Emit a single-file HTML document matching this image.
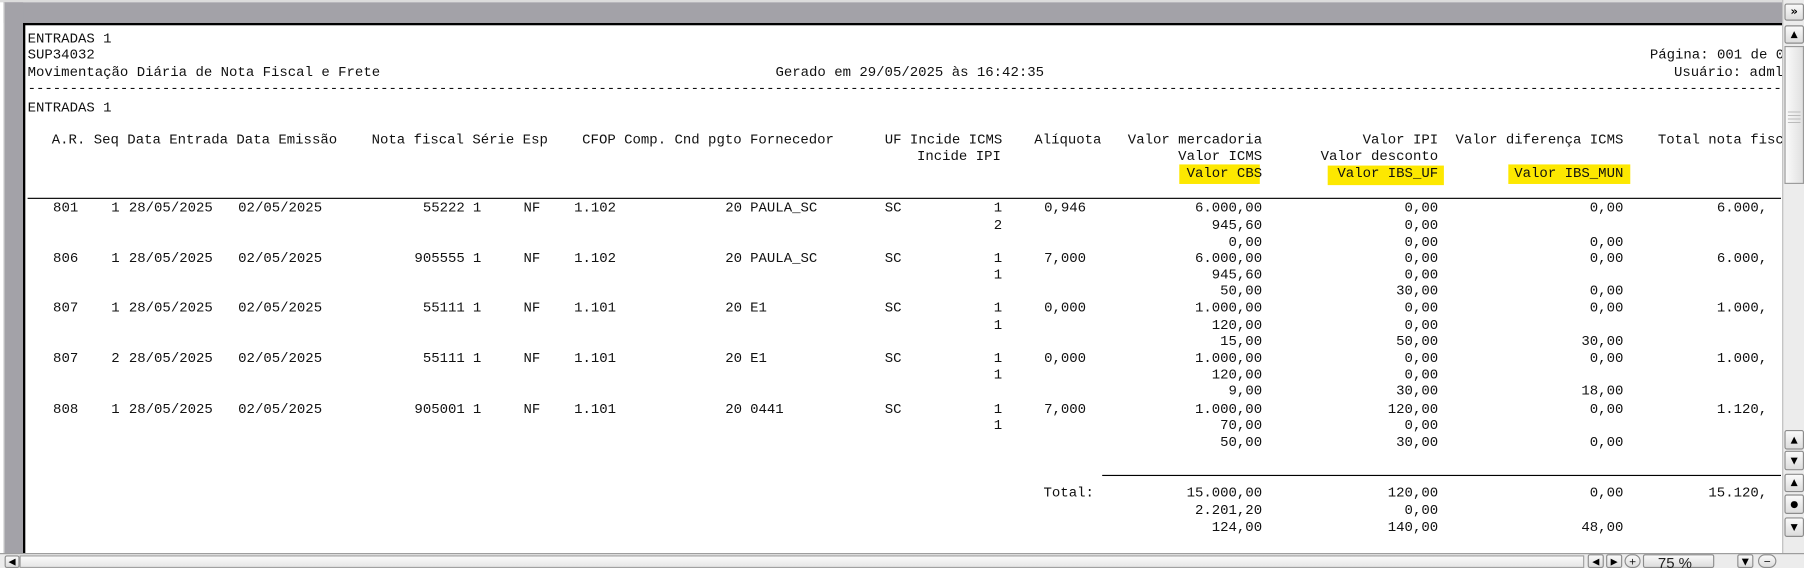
<!DOCTYPE html>
<html><head><meta charset="utf-8">
<style>
html,body{margin:0;padding:0;background:#fff;overflow:hidden;width:1804px;height:568px}
#w{position:absolute;left:0;top:0;width:1568px;height:494px;transform:scale(1.15051,1.1498);transform-origin:0 0;background:#fff;overflow:hidden}
.t{position:absolute;font-family:"Liberation Mono",monospace;font-size:12.17px;line-height:14px;color:#111;white-space:pre}
.r{position:absolute;left:0;top:0;text-align:right;font-family:"Liberation Mono",monospace;font-size:12.17px;line-height:14px;color:#111;white-space:pre}
.row{position:absolute;left:0;width:1548px;height:14px}
.row span{position:absolute;top:0;font-family:"Liberation Mono",monospace;font-size:12.17px;line-height:14px;color:#111;white-space:pre}
.e6{width:68px}.e11{width:104px}.e52{width:404px}.e85{width:645px}.e116{width:871px}.e126{width:944px}.e147{width:1097px}.e168{width:1250px}.e190{width:1411px}.e207{width:1536px}
.hl{position:absolute;background:#fde800}
.btn{position:absolute;background:linear-gradient(#fafafa,#dcdcdc);border:1px solid #8c8c8c;border-radius:2px;box-sizing:border-box;font-family:"DejaVu Sans",sans-serif;font-size:8px;text-align:center;color:#000}
</style></head><body>
<div id="w">
<div style="position:absolute;left:0;top:0;width:1568px;height:2px;background:#dcdcdc"></div>
<div style="position:absolute;left:3px;top:2px;width:1547px;height:18px;background:#a3a2a8"></div>
<div style="position:absolute;left:3px;top:2px;width:17px;height:480px;background:#a3a2a8"></div>
<div style="position:absolute;left:3px;top:2px;width:1px;height:480px;background:#d0d0d0"></div>
<div style="position:absolute;left:20px;top:20px;width:1530px;height:2px;background:#000"></div>
<div style="position:absolute;left:20px;top:20px;width:2px;height:462px;background:#000"></div>

<div class="hl" style="left:1025px;top:143px;width:70px;height:17px"></div>
<div class="hl" style="left:1154px;top:144px;width:101px;height:17px"></div>
<div class="hl" style="left:1311px;top:143px;width:106px;height:17px"></div>

<div class="t" style="left:24px;top:27px">ENTRADAS 1</div>
<div class="t" style="left:24px;top:41px">SUP34032</div>
<div class="t" style="left:1434px;top:41px">Página: 001 de 0</div>
<div class="t" style="left:24px;top:56px">Movimentação Diária de Nota Fiscal e Frete</div>
<div class="t" style="left:674px;top:56px">Gerado em 29/05/2025 às 16:42:35</div>
<div class="t" style="left:1455px;top:56px">Usuário: adml</div>
<div class="t" style="left:24px;top:70px">----------------------------------------------------------------------------------------------------------------------------------------------------------------------------------------------------------------------</div>
<div class="t" style="left:24px;top:87px">ENTRADAS 1</div>

<div class="row" style="top:115px"><span style="left:45px">A.R. Seq Data Entrada Data Emissão</span><span style="left:323px">Nota fiscal Série Esp</span><span style="left:506px">CFOP Comp. Cnd pgto Fornecedor</span><span style="left:769px">UF Incide ICMS</span><span style="left:899px">Alíquota</span><span class="r e147">Valor mercadoria</span><span class="r e168">Valor IPI</span><span class="r e190">Valor diferença ICMS</span><span style="left:1441px">Total nota fisc</span></div>
<div class="row" style="top:129px"><span style="left:797px">Incide IPI</span><span class="r e147">Valor ICMS</span><span class="r e168">Valor desconto</span></div>
<div class="row" style="top:144px"><span class="r e147">Valor CBS</span><span class="r e168">Valor IBS_UF</span><span class="r e190">Valor IBS_MUN</span></div>
<div style="position:absolute;left:24px;top:172px;width:1524px;height:1px;background:#000"></div>

<div class="row" style="top:174px"><span class="r e6">801</span><span class="r e11">1</span><span style="left:112px">28/05/2025</span><span style="left:207px">02/05/2025</span><span class="r e52">55222</span><span style="left:411px">1</span><span style="left:455px">NF</span><span style="left:499px">1.102</span><span class="r e85">20</span><span style="left:652px">PAULA_SC</span><span style="left:769px">SC</span><span class="r e116">1</span><span class="r e126">0,946</span><span class="r e147">6.000,00</span><span class="r e168">0,00</span><span class="r e190">0,00</span><span class="r e207">6.000,</span></div>
<div class="row" style="top:189px"><span class="r e116">2</span><span class="r e147">945,60</span><span class="r e168">0,00</span></div>
<div class="row" style="top:204px"><span class="r e147">0,00</span><span class="r e168">0,00</span><span class="r e190">0,00</span></div>
<div class="row" style="top:218px"><span class="r e6">806</span><span class="r e11">1</span><span style="left:112px">28/05/2025</span><span style="left:207px">02/05/2025</span><span class="r e52">905555</span><span style="left:411px">1</span><span style="left:455px">NF</span><span style="left:499px">1.102</span><span class="r e85">20</span><span style="left:652px">PAULA_SC</span><span style="left:769px">SC</span><span class="r e116">1</span><span class="r e126">7,000</span><span class="r e147">6.000,00</span><span class="r e168">0,00</span><span class="r e190">0,00</span><span class="r e207">6.000,</span></div>
<div class="row" style="top:232px"><span class="r e116">1</span><span class="r e147">945,60</span><span class="r e168">0,00</span></div>
<div class="row" style="top:246px"><span class="r e147">50,00</span><span class="r e168">30,00</span><span class="r e190">0,00</span></div>
<div class="row" style="top:261px"><span class="r e6">807</span><span class="r e11">1</span><span style="left:112px">28/05/2025</span><span style="left:207px">02/05/2025</span><span class="r e52">55111</span><span style="left:411px">1</span><span style="left:455px">NF</span><span style="left:499px">1.101</span><span class="r e85">20</span><span style="left:652px">E1</span><span style="left:769px">SC</span><span class="r e116">1</span><span class="r e126">0,000</span><span class="r e147">1.000,00</span><span class="r e168">0,00</span><span class="r e190">0,00</span><span class="r e207">1.000,</span></div>
<div class="row" style="top:276px"><span class="r e116">1</span><span class="r e147">120,00</span><span class="r e168">0,00</span></div>
<div class="row" style="top:290px"><span class="r e147">15,00</span><span class="r e168">50,00</span><span class="r e190">30,00</span></div>
<div class="row" style="top:305px"><span class="r e6">807</span><span class="r e11">2</span><span style="left:112px">28/05/2025</span><span style="left:207px">02/05/2025</span><span class="r e52">55111</span><span style="left:411px">1</span><span style="left:455px">NF</span><span style="left:499px">1.101</span><span class="r e85">20</span><span style="left:652px">E1</span><span style="left:769px">SC</span><span class="r e116">1</span><span class="r e126">0,000</span><span class="r e147">1.000,00</span><span class="r e168">0,00</span><span class="r e190">0,00</span><span class="r e207">1.000,</span></div>
<div class="row" style="top:319px"><span class="r e116">1</span><span class="r e147">120,00</span><span class="r e168">0,00</span></div>
<div class="row" style="top:333px"><span class="r e147">9,00</span><span class="r e168">30,00</span><span class="r e190">18,00</span></div>
<div class="row" style="top:349px"><span class="r e6">808</span><span class="r e11">1</span><span style="left:112px">28/05/2025</span><span style="left:207px">02/05/2025</span><span class="r e52">905001</span><span style="left:411px">1</span><span style="left:455px">NF</span><span style="left:499px">1.101</span><span class="r e85">20</span><span style="left:652px">0441</span><span style="left:769px">SC</span><span class="r e116">1</span><span class="r e126">7,000</span><span class="r e147">1.000,00</span><span class="r e168">120,00</span><span class="r e190">0,00</span><span class="r e207">1.120,</span></div>
<div class="row" style="top:363px"><span class="r e116">1</span><span class="r e147">70,00</span><span class="r e168">0,00</span></div>
<div class="row" style="top:378px"><span class="r e147">50,00</span><span class="r e168">30,00</span><span class="r e190">0,00</span></div>

<div style="position:absolute;left:958px;top:413px;width:590px;height:1px;background:#000"></div>
<div class="row" style="top:422px"><span style="left:907px">Total:</span><span class="r e147">15.000,00</span><span class="r e168">120,00</span><span class="r e190">0,00</span><span class="r e207">15.120,</span></div>
<div class="row" style="top:437px"><span class="r e147">2.201,20</span><span class="r e168">0,00</span></div>
<div class="row" style="top:452px"><span class="r e147">124,00</span><span class="r e168">140,00</span><span class="r e190">48,00</span></div>

<div style="position:absolute;left:1549px;top:0;width:19px;height:494px;background:#ececec;border-left:1px solid #bdbdbd"></div>
<div class="btn" style="left:1551px;top:3px;width:17px;height:15px;line-height:13px;font-size:10px;font-weight:bold">»</div>
<div class="btn" style="left:1551px;top:22px;width:17px;height:16px;line-height:14px">&#9650;</div>
<div style="position:absolute;left:1551px;top:40px;width:17px;height:120px;background:linear-gradient(90deg,#fafafa,#e0e0e0);border:1px solid #999;box-sizing:border-box"></div>
<div style="position:absolute;left:1554px;top:95px;width:11px;height:12px;background:repeating-linear-gradient(0deg,#bbb 0 1px,transparent 1px 3px)"></div>
<div class="btn" style="left:1551px;top:374px;width:17px;height:17px;line-height:15px">&#9650;</div>
<div class="btn" style="left:1551px;top:392px;width:17px;height:17px;line-height:15px">&#9660;</div>
<div class="btn" style="left:1551px;top:412px;width:17px;height:16px;line-height:14px">&#9650;</div>
<div class="btn" style="left:1551px;top:430px;width:17px;height:17px;line-height:15px">&#9679;</div>
<div class="btn" style="left:1551px;top:450px;width:17px;height:17px;line-height:15px">&#9660;</div>

<div style="position:absolute;left:0;top:481px;width:1568px;height:13px;background:#ececec;border-top:1px solid #999"></div>
<div class="btn" style="left:4px;top:483px;width:13px;height:11px;line-height:10px">&#9664;</div>
<div style="position:absolute;left:17px;top:483px;width:1360px;height:11px;background:linear-gradient(#fafafa,#e6e6e6);border:1px solid #a0a0a0;box-sizing:border-box"></div>
<div class="btn" style="left:1380px;top:482px;width:14px;height:12px;line-height:11px">&#9664;</div>
<div class="btn" style="left:1396px;top:482px;width:14px;height:12px;line-height:11px">&#9654;</div>
<div class="btn" style="left:1412px;top:482px;width:14px;height:12px;line-height:11px;border-radius:7px">+</div>
<div class="btn" style="left:1428px;top:482px;width:62px;height:12px;line-height:14px;font-size:13px;text-align:left;padding-left:12px;color:#222;font-family:'Liberation Sans',sans-serif">75 %</div>
<div class="btn" style="left:1510px;top:482px;width:14px;height:12px;line-height:11px">&#9660;</div>
<div class="btn" style="left:1528px;top:482px;width:16px;height:12px;line-height:11px;border-radius:7px">&#8722;</div>
</div>
</body></html>
